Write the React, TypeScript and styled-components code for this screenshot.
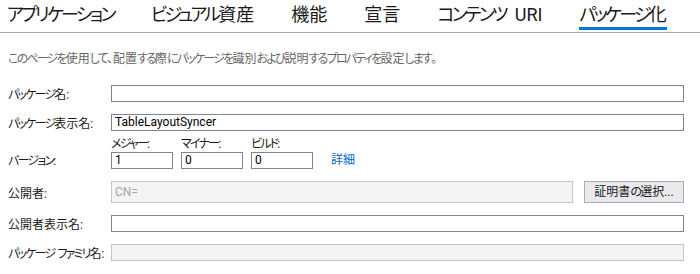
import React from "react"
import styled, { createGlobalStyle } from "styled-components"

const GlobalStyle = createGlobalStyle`
  html, body {
    margin: 0;
    padding: 0;
    background: #ffffff;
  }
  body {
    font-family: Roboto, "Noto Sans CJK JP", sans-serif;
    font-feature-settings: "palt";
    color: #1a1a1a;
  }
`

const Page = styled.div`
  width: 700px;
  height: 274px;
  overflow: hidden;
  background: #ffffff;
`

// kana in Meiryo UI is narrow, so tighten kana runs
const Kana = styled.span`
  letter-spacing: -0.15em;
`

const Jp: React.FC<{ text: string }> = ({ text }) => (
  <>
    {text.split(/([\u3040-\u30ff]+)/).map((part, i) =>
      /^[\u3040-\u30ff]+$/.test(part) ? <Kana key={i}>{part}</Kana> : part
    )}
  </>
)

const TabBar = styled.div`
  display: flex;
  gap: 37px;
  padding: 0 0 0 7px;
  height: 32px;
  border-bottom: 1px solid #a8a8a8;
`

const Tab = styled.div<{ $active?: boolean }>`
  position: relative;
  font-size: 18px;
  line-height: 30px;
  height: 32px;
  color: #1a1a1a;
  white-space: pre;
  &::after {
    content: "";
    display: ${(p) => (p.$active ? "block" : "none")};
    position: absolute;
    left: 0;
    right: 0;
    top: 27px;
    height: 3px;
    background: #0078d7;
  }
`

const Description = styled.p`
  margin: 18px 0 0 8px;
  font-size: 12px;
  line-height: 16px;
  color: #666666;
`

const Form = styled.div`
  display: grid;
  grid-template-columns: 103px 1fr;
  padding: 0 16px 0 8px;
  margin-top: 18px;
  row-gap: 12px;
  align-items: center;
`

const Label = styled.div`
  font-size: 12px;
  color: #1a1a1a;
  white-space: nowrap;
`

const TextBox = styled.div<{ $disabled?: boolean; $tall?: boolean }>`
  box-sizing: border-box;
  height: ${(p) => (p.$tall ? "22px" : "17px")};
  border: 1px solid ${(p) => (p.$disabled ? "#c4c4c4" : "#7a8599")};
  background: ${(p) => (p.$disabled ? "#f4f4f4" : "#ffffff")};
  color: ${(p) => (p.$disabled ? "#a3a3a3" : "#000000")};
  font-size: 12px;
  line-height: ${(p) => (p.$tall ? "20px" : "15px")};
  padding: 0 3px;
  white-space: nowrap;
  overflow: hidden;
  flex: 1;
`

const VersionGroup = styled.div`
  display: flex;
  align-items: flex-end;
  gap: 8px;
  margin-top: -6px;
`

const VersionField = styled.div`
  display: flex;
  flex-direction: column;
  width: 62px;
`

const SmallLabel = styled.div`
  font-size: 12px;
  line-height: 14px;
  margin-bottom: 1px;
  color: #1a1a1a;
  white-space: nowrap;
`

const VersionLabel = styled(Label)`
  align-self: end;
  margin-bottom: 1px;
`

const Link = styled.span`
  font-size: 12px;
  color: #0066cc;
  margin-left: 10px;
  line-height: 17px;
`

const PublisherRow = styled.div`
  display: flex;
  gap: 11px;
  align-items: center;
`

const Button = styled.div`
  box-sizing: border-box;
  width: 100px;
  height: 22px;
  border: 1px solid #adadad;
  background: #e9e9ee;
  font-size: 12px;
  line-height: 20px;
  text-align: center;
  color: #1a1a1a;
`

const tabs = ["アプリケーション", "ビジュアル資産", "機能", "宣言", "コンテンツ  URI", "パッケージ化"]

const versions = [
  { label: "メジャー:", value: "1" },
  { label: "マイナー:", value: "0" },
  { label: "ビルド:", value: "0" },
]

export default function App() {
  return (
    <Page>
      <GlobalStyle />
      <TabBar>
        {tabs.map((t, i) => (
          <Tab key={t} $active={i === tabs.length - 1}>
            <Jp text={t} />
          </Tab>
        ))}
      </TabBar>
      <Description>
        <Jp text="このページを使用して、配置する際にパッケージを識別および説明するプロパティを設定します。" />
      </Description>
      <Form>
        <Label><Jp text="パッケージ名:" /></Label>
        <TextBox />
        <Label><Jp text="パッケージ表示名:" /></Label>
        <TextBox>TableLayoutSyncer</TextBox>
        <VersionLabel><Jp text="バージョン:" /></VersionLabel>
        <VersionGroup>
          {versions.map((v) => (
            <VersionField key={v.label}>
              <SmallLabel><Jp text={v.label} /></SmallLabel>
              <TextBox>{v.value}</TextBox>
            </VersionField>
          ))}
          <Link>詳細</Link>
        </VersionGroup>
        <Label>公開者:</Label>
        <PublisherRow>
          <TextBox $disabled $tall>CN=</TextBox>
          <Button><Jp text="証明書の選択..." /></Button>
        </PublisherRow>
        <Label>公開者表示名:</Label>
        <TextBox />
        <Label><Jp text="パッケージ ファミリ名:" /></Label>
        <TextBox $disabled />
      </Form>
    </Page>
  )
}
